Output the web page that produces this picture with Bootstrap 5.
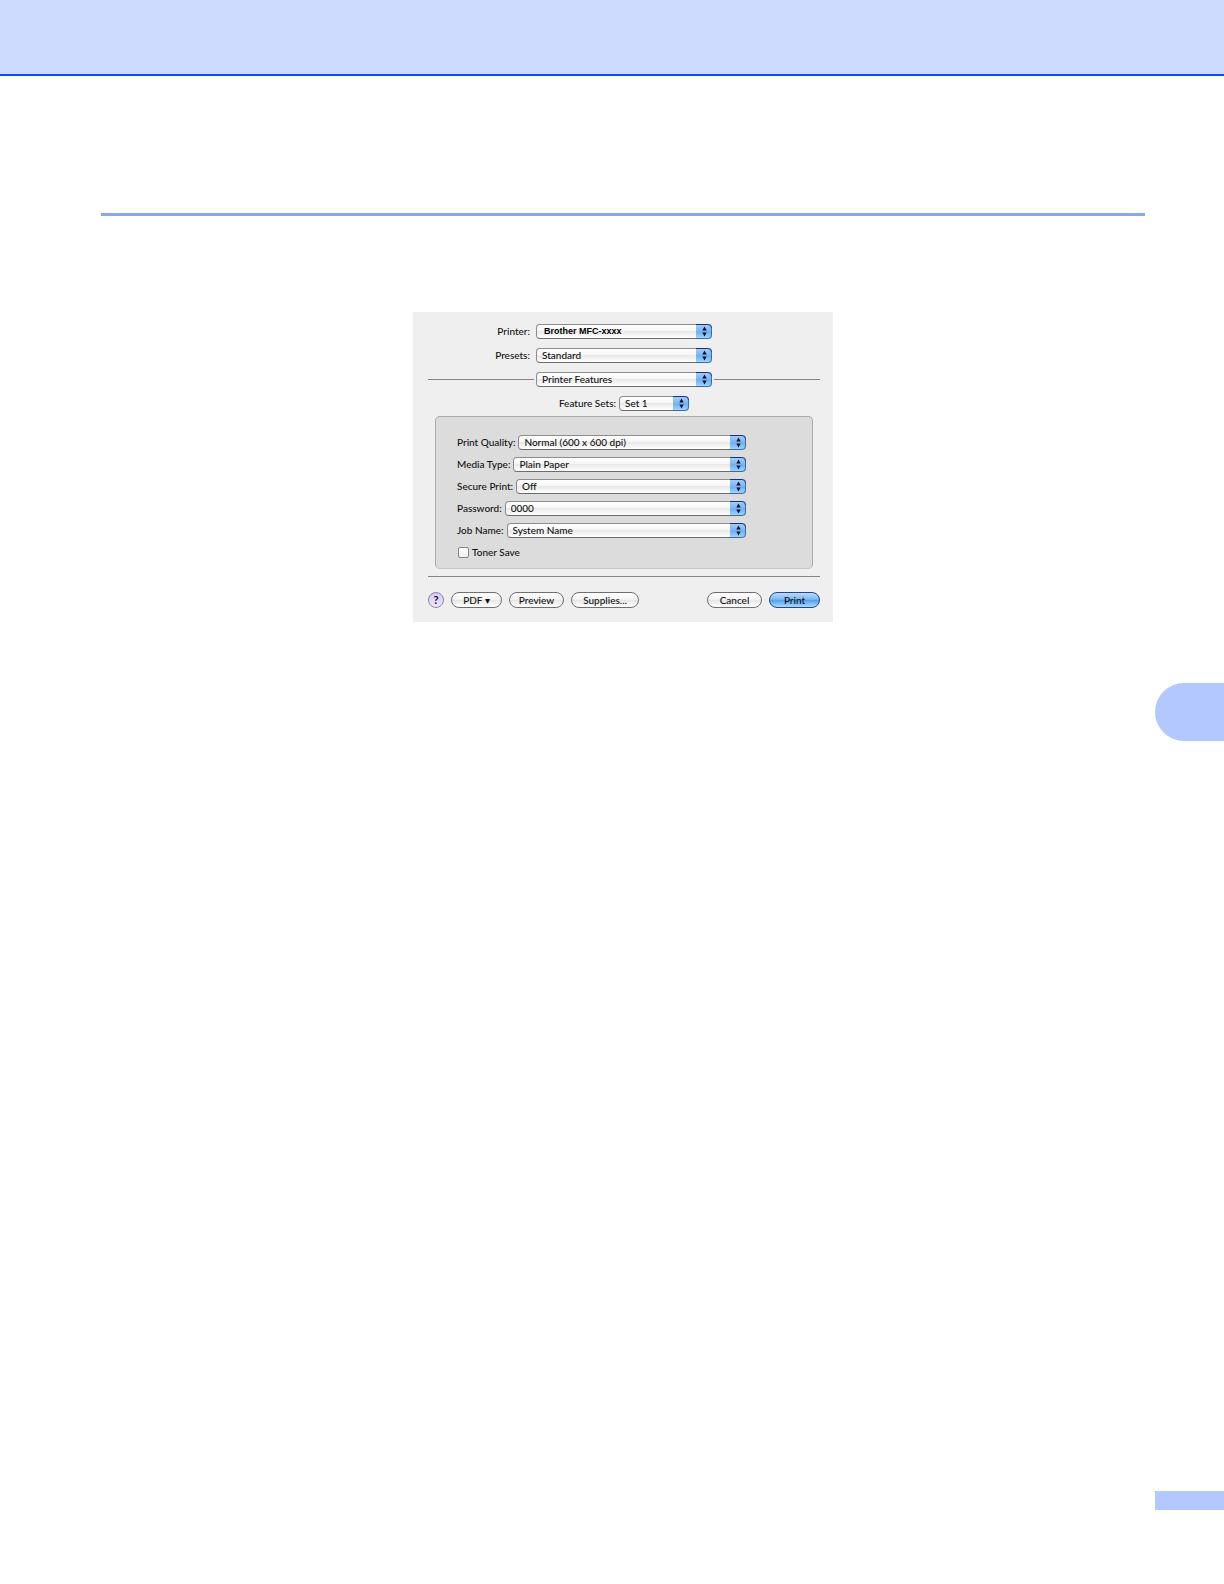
<!DOCTYPE html>
<html lang="en">
<head>
<meta charset="utf-8">
<meta name="viewport" content="width=device-width, initial-scale=1">
<title>Printer Features</title>
<link rel="stylesheet" href="https://cdn.jsdelivr.net/npm/bootstrap@5.3.0/dist/css/bootstrap.min.css">
<style>
body { background: #fff; color: #111; font-family: Lato, "Noto Sans", sans-serif; }
.page-band { height: 76px; background: #ccdbff; border-bottom: 2px solid #0d4fe0; }
.page-body { padding: 137px 79px 0 101px; }
.page-rule { height: 3px; background: #8aa6ee; margin-bottom: 96px; }
.print-dialog { width: 420px; max-width: 100%; background: #efefef; padding: 12px 13px 14px 15px; font-size: 10px; line-height: 15px; font-weight: 500; }
.print-dialog label { white-space: nowrap; }
.top-rows { gap: 9px; }
.top-label { width: 102px; margin-right: 6px; text-align: right; }
.sets-label { width: 188px; margin-right: 3px; text-align: right; }
.top-select { width: 176px; }
.set-select { width: 70px; }
.row-gap { gap: 7px; }
.pane-row { gap: 2px; }
.line { height: 1px; background: #858585; }
.foot-line { margin: 7px 0 15px; }
.pop { position: relative; height: 15px; display: flex; }
.pop select { appearance: none; width: 100%; height: 15px; padding: 0 18px 0 5px; border: 1px solid #8c8c8c; border-bottom-color: #6c6c6c; border-radius: 4px; background: linear-gradient(#fff 0, #f6f6f6 45%, #e9e9e9 50%, #fff 100%); color: #111; font: inherit; line-height: 13px; }
.pop .brand-name { font: bold 9px/13px "Liberation Sans", Arial, sans-serif; padding-left: 7px; color: #000; }
.pop svg { position: absolute; right: 0; top: 0; width: 16px; height: 15px; pointer-events: none; }
.panel { margin: 5px 7px 0; height: 153px; padding: 18px 66px 0 21px; background: #dcdcdc; border: 1px solid #a9a9a9; border-bottom-color: #c6c6c6; border-radius: 5px; }
.panel label { margin-right: 3px; }
.tick { appearance: none; width: 11px; height: 11px; margin: 0 3px 0 1px; border: 1px solid #858585; border-radius: 2px; background: linear-gradient(#fff, #eee); }
.pill { height: 16px; padding: 0; border: 1px solid #6f6f6f; border-radius: 8px; background: linear-gradient(#fff 0, #f5f5f5 45%, #e6e6e6 50%, #fff 100%); color: #111; font: inherit; line-height: 14px; }
.pill-sm { width: 51px; }
.pill-md { width: 55px; }
.pill-lg { width: 68px; }
.pill-help { width: 16px; background: linear-gradient(#d5c8fa, #eee8ff); border-color: #8a82a8; font-size: 11px; font-weight: 700; }
.pill-main { border-color: #27438f; background: linear-gradient(#b9dbfa 0, #7fb8f3 45%, #559fec 52%, #a5dcff 100%); }
.side-tab { width: 69px; height: 58px; margin-top: 61px; background: #b3c8ff; border-radius: 29px 0 0 29px; }
.page-mark { width: 69px; height: 19px; margin-bottom: 74px; background: #b3c8ff; }
</style>
<script src="https://cdn.jsdelivr.net/npm/bootstrap@5.3.0/dist/js/bootstrap.bundle.min.js"></script>
</head>
<body class="d-flex flex-column min-vh-100">
<svg width="0" height="0" class="position-absolute" aria-hidden="true">
  <defs>
    <linearGradient id="blue" x1="0" y1="0" x2="0" y2="1">
      <stop offset="0" stop-color="#a9d0f8"/><stop offset=".48" stop-color="#7db5f2"/>
      <stop offset=".54" stop-color="#6fb0f2"/><stop offset="1" stop-color="#a4dcff"/>
    </linearGradient>
    <symbol id="cap" viewBox="0 0 16 15">
      <path d="M0 0H12Q16 0 16 4V11Q16 15 12 15H0Z" fill="url(#blue)"/>
      <path d="M0 .5H12Q15.500 .5 15.500 4" fill="none" stroke="#182f86"/>
      <path d="M15.500 4V11Q15.500 14.500 12 14.500H0" fill="none" stroke="#3c6ca8"/>
      <path d="M8.500 2.500L10.700 6.500H6.300ZM8.500 12.500L10.700 8.500H6.300Z" fill="#071330"/>
    </symbol>
  </defs>
</svg>
<header class="page-band"></header>
<main class="page-body">
  <div class="page-rule"></div>
  <form class="print-dialog mx-auto">
    <div class="top-rows d-flex flex-column">
      <div class="d-flex">
        <label class="top-label" for="printer">Printer:</label>
        <div class="pop top-select"><select id="printer" class="brand-name"><option>Brother MFC-xxxx</option></select><svg><use href="#cap"/></svg></div>
      </div>
      <div class="d-flex">
        <label class="top-label" for="presets">Presets:</label>
        <div class="pop top-select"><select id="presets"><option>Standard</option></select><svg><use href="#cap"/></svg></div>
      </div>
      <div class="pane-row d-flex align-items-center">
        <div class="line flex-fill"></div>
        <div class="pop top-select"><select id="pane" aria-label="Options pane"><option>Printer Features</option></select><svg><use href="#cap"/></svg></div>
        <div class="line flex-fill"></div>
      </div>
      <div class="d-flex">
        <label class="sets-label" for="sets">Feature Sets:</label>
        <div class="pop set-select"><select id="sets"><option>Set 1</option></select><svg><use href="#cap"/></svg></div>
      </div>
    </div>
    <div class="panel d-flex flex-column row-gap">
      <div class="d-flex"><label for="quality">Print Quality:</label>
        <div class="pop flex-fill"><select id="quality"><option>Normal (600 x 600 dpi)</option></select><svg><use href="#cap"/></svg></div></div>
      <div class="d-flex"><label for="media">Media Type:</label>
        <div class="pop flex-fill"><select id="media"><option>Plain Paper</option></select><svg><use href="#cap"/></svg></div></div>
      <div class="d-flex"><label for="secure">Secure Print:</label>
        <div class="pop flex-fill"><select id="secure"><option>Off</option></select><svg><use href="#cap"/></svg></div></div>
      <div class="d-flex"><label for="password">Password:</label>
        <div class="pop flex-fill"><select id="password"><option>0000</option></select><svg><use href="#cap"/></svg></div></div>
      <div class="d-flex"><label for="job">Job Name:</label>
        <div class="pop flex-fill"><select id="job"><option>System Name</option></select><svg><use href="#cap"/></svg></div></div>
      <div class="d-flex align-items-center"><input type="checkbox" id="toner" class="tick"><label for="toner">Toner Save</label></div>
    </div>
    <div class="line foot-line"></div>
    <div class="d-flex row-gap">
      <button type="button" class="pill pill-help" aria-label="Help">?</button>
      <button type="button" class="pill pill-sm">PDF ▾</button>
      <button type="button" class="pill pill-md">Preview</button>
      <button type="button" class="pill pill-lg">Supplies...</button>
      <button type="button" class="pill pill-md ms-auto">Cancel</button>
      <button type="submit" class="pill pill-sm pill-main">Print</button>
    </div>
  </form>
</main>
<div class="side-tab ms-auto"></div>
<footer class="mt-auto"><div class="page-mark ms-auto"></div></footer>
</body>
</html>
